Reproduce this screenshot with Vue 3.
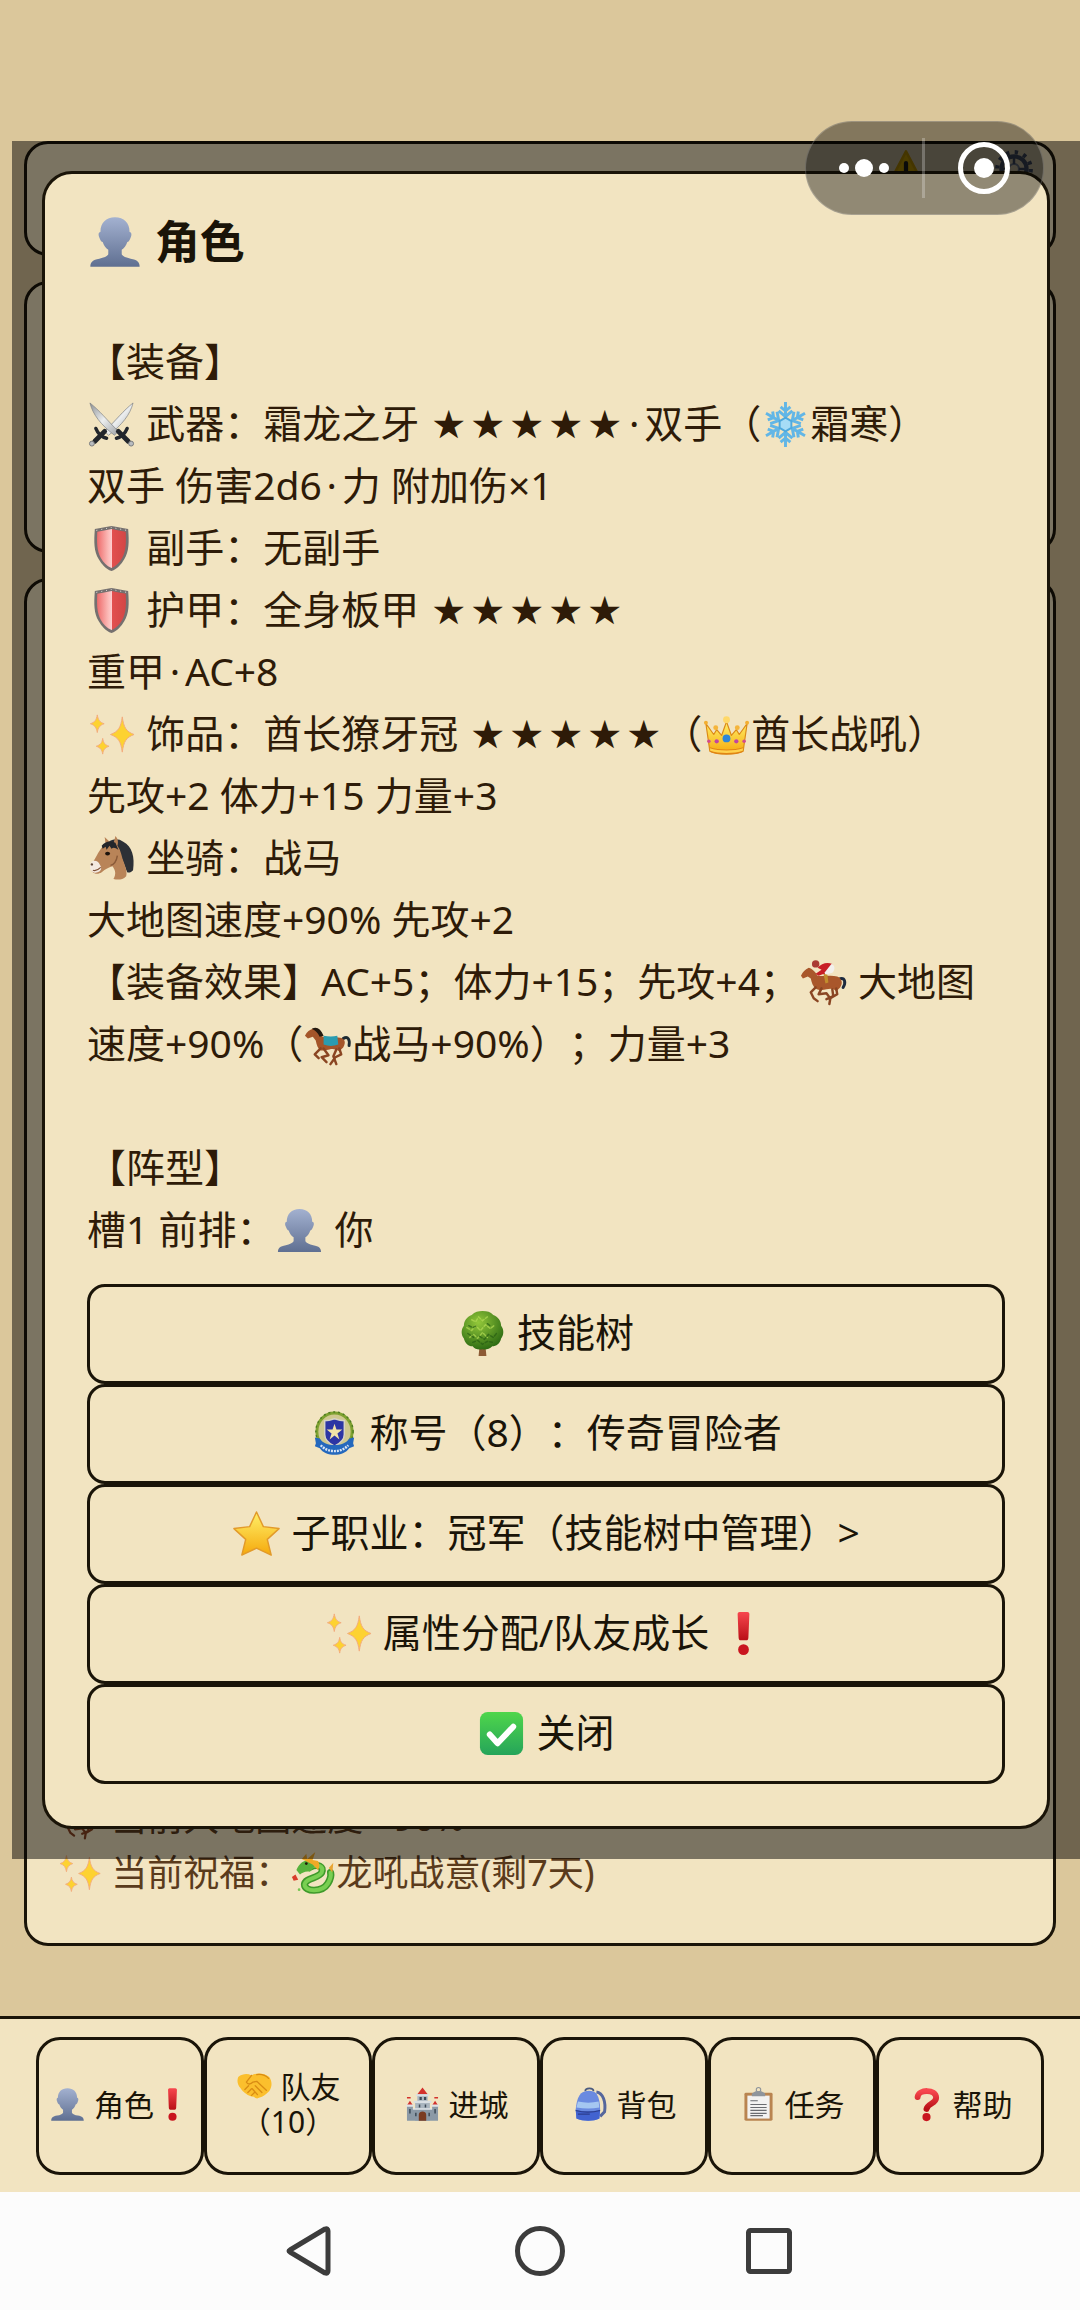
<script setup>
import { h } from 'vue'

const Icon = (props) =>
  h('svg', { class: 'ico', viewBox: '0 0 50 50', 'aria-hidden': 'true' }, [h('use', { href: '#i-' + props.name })])
Icon.props = ['name']

const actions = [
  { icon: 'tree', text: '技能树' },
  { icon: 'badge', text: '称号（8）：传奇冒险者' },
  { icon: 'star', text: '子职业：冠军（技能树中管理）>' },
  { icon: 'sparkles', text: '属性分配/队友成长 ', mark: true },
  { icon: 'check', text: '关闭' },
]

const tabs = [
  { icon: 'user', text: '角色', mark: true },
  { icon: 'handshake', text: '队友（10）' },
  { icon: 'castle', text: '进城' },
  { icon: 'backpack', text: '背包' },
  { icon: 'clipboard', text: '任务' },
  { icon: 'question', text: '帮助' },
]
</script>

<template>
  <svg class="sprite" aria-hidden="true">
    <defs>
      <linearGradient id="g-user" x1="0" y1="0" x2="0" y2="1"><stop offset="0" stop-color="#a3b1d0" /><stop offset="1" stop-color="#5f6f91" /></linearGradient>
      <linearGradient id="g-gold" x1="0" y1="0" x2="0" y2="1"><stop offset="0" stop-color="#fff06a" /><stop offset="1" stop-color="#f5a90c" /></linearGradient>
      <linearGradient id="g-green" x1="0" y1="0" x2="0" y2="1"><stop offset="0" stop-color="#4fd64b" /><stop offset="1" stop-color="#25a45a" /></linearGradient>
      <linearGradient id="g-red" x1="0" y1="0" x2="0" y2="1"><stop offset="0" stop-color="#f7474e" /><stop offset="1" stop-color="#b90f16" /></linearGradient>
      <linearGradient id="g-shield" x1="0" y1="0" x2="1" y2="0"><stop offset="0" stop-color="#ee6a6a" /><stop offset=".38" stop-color="#fbb9b6" /><stop offset=".5" stop-color="#fcc" /><stop offset=".52" stop-color="#e2504f" /><stop offset="1" stop-color="#d24645" /></linearGradient>
      <linearGradient id="g-blade" x1="0" y1="0" x2="1" y2="1"><stop offset="0" stop-color="#8c9094" /><stop offset=".5" stop-color="#eceeef" /><stop offset="1" stop-color="#9da1a5" /></linearGradient>
      <radialGradient id="g-tree" cx=".4" cy=".3" r=".7"><stop offset="0" stop-color="#93c83a" /><stop offset="1" stop-color="#2f6d14" /></radialGradient>
    </defs>

    <symbol id="i-user" viewBox="0 0 50 50">
      <path fill="url(#g-user)" d="M25 3c8 0 13 5 13 13 2 0 2 3 1 5-1 3-2 4-3 4-1 3-3 6-5 7v4c1 2 4 3 8 4 6 1 8 3 8 7H3c0-4 2-6 8-7 4-1 7-2 8-4v-4c-2-1-4-4-5-7-1 0-2-1-3-4-1-2-1-5 1-5 0-8 5-13 13-13z" />
    </symbol>

    <symbol id="i-swords" viewBox="0 0 50 50">
      <path fill="url(#g-blade)" stroke="#7c7f82" stroke-width=".7" d="M47 3c-3 12-11 22-25 33l-4-4C30 20 37 11 47 3z" />
      <path fill="url(#g-blade)" stroke="#7c7f82" stroke-width=".7" d="M3 3c3 12 11 22 25 33l4-4C20 20 13 11 3 3z" />
      <g stroke="#22262c" fill="none" stroke-linecap="round">
        <path stroke-width="3.500" d="M9 29c2 5 6 9 11 10M41 29c-2 5-6 9-11 10" />
        <path stroke-width="5" d="M18 32L8 42M32 32l10 10" />
      </g>
      <circle cx="5" cy="44.500" r="2.500" fill="#b9bcc0" stroke="#77797c" /><circle cx="45" cy="44.500" r="2.500" fill="#b9bcc0" stroke="#77797c" />
    </symbol>

    <symbol id="i-shield" viewBox="0 0 50 50">
      <path fill="#75706f" d="M8 5c6-1 11-2 17-3 6 1 11 2 17 3 1 13 1 23-4 31-3 5-7 10-13 12-6-2-10-7-13-12C7 28 7 18 8 5z" />
      <path fill="url(#g-shield)" d="M10.500 8C15 7 20 6 25 5c5 1 10 2 14.500 3 .5 11 .5 19-3.500 26.500-2.500 4.500-6 8.500-11 10.500-5-2-8.500-6-11-10.500C10 27 10 19 10.500 8z" />
      <path fill="none" stroke="#e4e0de" stroke-width="1" stroke-dasharray="1 4" d="M9.500 6.500C15 5.500 20 4.500 25 3.500 30 4.500 35 5.500 40.500 6.500" />
    </symbol>

    <symbol id="i-sparkles" viewBox="0 0 50 50">
      <g fill="#fdd231" stroke="#f3ab7e" stroke-width="1" stroke-linejoin="round">
        <path d="M36 7c1.500 11 4 15 12 18-8 3-10.500 7-12 18-1.500-11-4-15-12-18 8-3 10.500-7 12-18z" />
        <path d="M10.500 5c.8 5 2.500 7.500 7 9-4.500 1.500-6.200 4-7 9-.8-5-2.500-7.500-7-9 4.500-1.500 6.200-4 7-9z" />
        <path d="M16 29c.7 4.500 2.200 6.500 6.500 8-4.300 1.500-5.800 3.500-6.500 8-.7-4.500-2.200-6.500-6.500-8 4.300-1.500 5.800-3.500 6.500-8z" />
      </g>
    </symbol>

    <symbol id="i-snow" viewBox="0 0 50 50">
      <path v-for="a in 6" :key="a" :transform="'rotate(' + a * 60 + ' 25 25)'" fill="none" stroke="#62b6e6" stroke-width="3" d="M25 23V2M25 17l-7-6M25 17l7-6M25 11l-5-4M25 11l5-4" />
      <path fill="#a7dcf6" stroke="#4fa9dd" stroke-width="2" d="M25 18l6 3.500v7L25 32l-6-3.500v-7z" />
    </symbol>

    <symbol id="i-crown" viewBox="0 0 50 50">
      <path fill="url(#g-gold)" stroke="#dc8a17" stroke-width="1.200" stroke-linejoin="round" d="M4 14l8 11 3-5 5 6 5-14 5 14 5-6 3 5 8-11-4 28c-8 4-26 4-34 0z" />
      <path fill="#e08514" d="M8 38c9 3 25 3 34 0l-1 5c-8 3-24 3-32 0z" /><path fill="#ffd24d" d="M8 39c9 3 25 3 34 0l-.5 2.500c-8 3-25 3-33 0z" />
      <circle cx="25" cy="10" r="3.500" fill="#ffd868" /><circle cx="4" cy="13" r="2" fill="#f3ae30" /><circle cx="46" cy="13" r="2" fill="#f3ae30" /><circle cx="14" cy="18" r="2.500" fill="#f5b53b" /><circle cx="36" cy="18" r="2.500" fill="#f5b53b" />
      <circle cx="25" cy="29" r="4" fill="#2f86d8" /><circle cx="15" cy="32" r="2.200" fill="#c144a4" /><circle cx="35" cy="32" r="2.200" fill="#c144a4" /><circle cx="7" cy="32" r="1.800" fill="#d24c8e" /><circle cx="43" cy="32" r="1.800" fill="#d24c8e" />
    </symbol>

    <symbol id="i-horsehead" viewBox="0 0 50 50">
      <path fill="#2c3036" d="M22 8c4-3 10-4 15 0 9 5 12 15 10 29-2 2-4 3-6 2l-5-13-12-10z" />
      <path fill="#b98458" d="M19 10l-1-7 4 4c1 1 3 2 5 3l2-8c3 3 3 7 2 10 4 5 4 11 7 18 2 5 3 10 2 13-4 4-8 4-13 3 3-5 2-9-1-13-4 1-7 3-11 6-3 2-7 2-9 0-3-3-2-7 0-10 4-6 6-13 13-19z" />
      <path fill="#f3e8e0" d="M5 28c3-2 7 0 8 3 2 3 2 5 0 7-3 2-6 2-8 0-3-3-2-7 0-10z" />
      <path fill="#23262b" d="M15 12c3-4 8-6 14-3l3 7c-3-2-5-3-7-1l-2-3-3 4-1-3-3 2z" />
      <ellipse cx="21" cy="20" rx="2.500" ry="2" fill="#1d130d" /><path stroke="#7b4c31" stroke-width="1.200" fill="none" d="M6 37c3 1 6-1 8-3" /><circle cx="5" cy="31" r="1.200" fill="#5e4334" />
      <path stroke="#8a5a38" stroke-width="1.500" fill="none" d="M31 22c-1 6-3 9-7 10" />
    </symbol>

    <symbol id="i-horse" viewBox="0 0 50 50">
      <path fill="none" stroke="#1c2a33" stroke-width="3" stroke-linecap="round" d="M41 19c5-3 7 1 6 7" />
      <path fill="#a4552a" d="M2 16c2-4 5-6 8-7 5 1 7 4 10 8 7 1 12 0 18 1 5 1 6 5 3 10l-4 4c-3-2-6-3-10-2-4 1-6 1-9 1-3-2-4-5-5-10l-3-4-5 2z" />
      <path fill="none" stroke="#8a4522" stroke-width="2.500" stroke-linecap="round" stroke-linejoin="round" d="M18 29l-6 6 4 4M21 29l5 7-7 2 5 5M37 29l2 6-6 3-5 7M34 30l-3 7 3 8" />
      <path fill="#2a9cb0" d="M21 16c5 1 10 1 14 0l1 9c-5 2-10 2-15 0z" />
      <path fill="#24190f" d="M9 9c5-3 9 0 12 7l-4 1c-2-4-4-6-8-8z" />
    </symbol>

    <symbol id="i-jockey" viewBox="0 0 50 50">
      <path fill="none" stroke="#1c2a3f" stroke-width="3" stroke-linecap="round" d="M42 21c5-1 6 4 3 9" />
      <path fill="#a9572b" d="M2 18c2-4 4-6 8-8 4 1 7 5 9 8 8 1 14-1 20 1 5 2 6 7 3 11l-4 4c-3-3-6-3-10-2-4 1-8 1-11-1-3-2-4-6-5-10l-3-2-5 2z" />
      <path fill="none" stroke="#8a4522" stroke-width="2.500" stroke-linecap="round" stroke-linejoin="round" d="M17 30l-5 5 3 6 4 3M23 31l-3 6 8-1 3 4M38 31l1 6-7 4-1 6M34 32l1 7-7 3" />
      <circle cx="17" cy="6" r="3.800" fill="#a93a33" /><path fill="#c81e25" d="M19 10c4-5 10-6 15-4l-5 10c-4 0-6 1-9 2l-3-2 6-4z" />
      <path fill="#f3f0ec" d="M33 6c4 1 4 6 1 9l-7 2-1-2z" /><path fill="#c28d2d" d="M25 16l4 1 1 8-3 1z" />
    </symbol>

    <symbol id="i-tree" viewBox="0 0 50 50">
      <path fill="#8d5a35" d="M22 38h6l1 10h-8z" />
      <path fill="url(#g-tree)" d="M25 2c5 0 8 1 11 4 5 2 8 6 8 11 3 4 3 9 0 13-1 5-5 8-9 8-3 3-7 4-10 3-4 1-8 0-10-3-5 0-8-4-9-8-3-4-3-9 0-13 0-5 3-9 8-11 3-3 7-4 11-4z" />
      <path fill="none" stroke="#b4dc55" stroke-width="1.500" stroke-linecap="round" stroke-dasharray="3 2" d="M14 11l4 2 3-5 4 4 5-4M9 19l5 3 4-5 5 5 5-6 5 4 5-4M12 29l4-3 4 4 5-6 5 5" opacity=".7" />
      <path fill="none" stroke="#275c12" stroke-width="1.500" stroke-linecap="round" stroke-dasharray="3 2" d="M11 17l4 2 4-2M22 28l5 3 4-5 5 3 4-5M15 34l5-2 5 4 5-3 5 1M30 15l4 3M10 25l6 4" opacity=".7" />
    </symbol>

    <symbol id="i-badge" viewBox="0 0 50 50">
      <ellipse cx="25" cy="23" rx="18" ry="19" fill="#cfc88f" stroke="#7fa231" stroke-width="3" />
      <ellipse cx="25" cy="23" rx="19" ry="20" fill="none" stroke="#4f7c22" stroke-width="1.500" stroke-dasharray="2 3" />
      <path fill="#2c35a4" stroke="#d5d3c6" stroke-width="1.500" d="M15 12c4 0 7-1 10-2 3 1 6 2 10 2v14c0 5-4 9-10 12-6-3-10-7-10-12z" />
      <path fill="#f2e3a7" d="M25 15l2 6h6l-5 4 2 6-5-4-5 4 2-6-5-4h6z" />
      <path fill="#2468bd" d="M5 29l5 1c5 9 25 9 30 0l5-1-1 6 1 3-5 2c-6 9-24 9-30 0l-5-2 1-3z" />
      <path fill="none" stroke="#d8e4f5" stroke-width="2.500" stroke-dasharray="2 1" d="M11 37c7 8 21 8 28 0" />
    </symbol>

    <symbol id="i-star" viewBox="0 0 50 50">
      <path fill="url(#g-gold)" stroke="#e29a2a" stroke-width="1.500" stroke-linejoin="round" d="M25 3l7 15 16 2-12 11 4 16-15-7-15 7 4-16L2 20l16-2z" />
    </symbol>

    <symbol id="i-check" viewBox="0 0 50 50">
      <rect x="3" y="3" width="44" height="44" rx="8" fill="url(#g-green)" />
      <path fill="none" stroke="#fff" stroke-width="6" stroke-linecap="round" stroke-linejoin="round" d="M13 26l8 9 16-17" />
    </symbol>

    <symbol id="i-exclaim" viewBox="0 0 50 50">
      <path fill="url(#g-red)" d="M19 5c0-1 1-2 2-2h8c1 0 2 1 2 2l-1 24c0 2-1 3-2 3h-6c-1 0-2-1-2-3z" /><circle cx="25" cy="41.500" r="5.500" fill="#c9151f" />
    </symbol>

    <symbol id="i-question" viewBox="0 0 50 50">
      <path fill="none" stroke="url(#g-red)" stroke-width="8" stroke-linecap="round" stroke-linejoin="round" d="M13 15c1-11 25-11 25 1 0 8-11 7-13 15" /><circle cx="25" cy="42" r="5.500" fill="#c9151f" />
    </symbol>

    <symbol id="i-handshake" viewBox="0 0 50 50">
      <path fill="#fbbf2d" d="M3 12c6-4 12-5 18-2 7-4 17-3 24 2 4 6 4 13 0 19-4 4-9 8-13 9-3 2-6 1-8-1-8-1-14-6-18-12-4-4-5-10-3-15z" />
      <path fill="none" stroke="#d98c14" stroke-width="1.800" stroke-linecap="round" stroke-linejoin="round" d="M21 10l-7 9c2 4 6 3 9 0l5-1 13 12M26 24l9 9M22 28l7 8M12 29l5-5M16 33l5-5M21 37l4-4M28 9c6-1 12 1 16 5" />
    </symbol>

    <symbol id="i-castle" viewBox="0 0 50 50">
      <path fill="#d3322d" d="M25 2l7 9H18zM8 20l4 6H4zM42 20l4 6h-8z" /><path fill="none" stroke="#d3322d" stroke-width="2" d="M9 16H4M46 16h-5" />
      <path fill="#a9b5bf" d="M18 11h14v10h3v26H15V21h3z" /><path fill="#d9dfe3" d="M16 11h18v3H16zM13 20h24v3H13z" />
      <path fill="#8b99a6" d="M4 26h8v21H4zM38 26h8v21h-8zM12 31h26v16H12z" /><path fill="#dfe4e7" d="M3 25h10v3H3zM37 25h10v3H37zM12 30h26v2H12z" />
      <path fill="#7a3c22" d="M20 47V39c0-6 10-6 10 0v8z" /><path fill="#3b4955" d="M21 15h3v4h-3zM27 15h3v4h-3zM20 25h2v4h-2zM28 25h2v4h-2zM7 31h2v6H7zM41 31h2v6h-2zM15 36h2v5h-2zM33 36h2v5h-2z" />
    </symbol>

    <symbol id="i-backpack" viewBox="0 0 50 50">
      <path fill="none" stroke="#56679c" stroke-width="4" d="M33 8c9 1 13 14 11 27l-6 6" />
      <path fill="none" stroke="#4a5a80" stroke-width="2.500" d="M18 7c0-5 11-5 11 0" />
      <path fill="#6a8ae0" d="M12 10c6-5 16-5 21 0 4 6 5 14 5 22l-1 12c-8 4-22 4-31 0L5 32c1-9 2-16 7-22z" />
      <path fill="#a5c7f1" d="M8 21c9 2 19 2 28 0l1 8c-10 2-20 2-31 0z" />
      <path fill="#4263d0" d="M5 32c11 3 22 3 33 0l-1 12c-8 4-22 4-31 0z" /><path fill="none" stroke="#2c3e8c" stroke-width="1.500" d="M5 33c11 3 22 3 33 0M8 38h16" />
    </symbol>

    <symbol id="i-clipboard" viewBox="0 0 50 50">
      <rect x="6" y="9" width="38" height="38" rx="2" fill="#b98450" /><rect x="10" y="13" width="30" height="31" fill="#f3f2f1" />
      <path stroke="#6a6c70" stroke-width="1.500" d="M14 20h10M14 25h22M14 29h22M14 33h22M14 37h22M14 40h17" />
      <path fill="#8f959c" d="M16 10l5-3h8l5 3v4H16z" /><circle cx="25" cy="5" r="3" fill="none" stroke="#8f959c" stroke-width="1.500" />
    </symbol>

    <symbol id="i-dragon" viewBox="0 0 50 50">
      <path fill="none" stroke="#3f9a2b" stroke-width="8" stroke-linecap="round" stroke-linejoin="round" d="M21 18c9-4 16-1 13 6-3 6-18 6-19 13 0 9 20 9 26-1 3-5 4-8 3-12" />
      <path fill="none" stroke="#79cf52" stroke-width="4.500" stroke-linecap="round" stroke-linejoin="round" d="M21 18c9-4 16-1 13 6-3 6-18 6-19 13 0 9 20 9 26-1 3-5 4-8 3-12" />
      <path fill="#57b23c" d="M6 21c3-7 8-11 15-11l6 6-6 7c-5-1-8 1-11 3z" /><path fill="#f0a927" d="M12 9l5-6 1 6 9-8-3 9 6 1c2 3 2 7 0 10l-6-6z" />
      <path fill="#e9a431" d="M42 19l5-6-1 11z" /><circle cx="17" cy="14" r="1.500" fill="#231a09" /><path fill="#d93c2b" d="M1 29l4-3 3 6-5 1z" /><circle cx="9" cy="43" r="1.500" fill="#76c653" />
    </symbol>

    <symbol id="i-warning" viewBox="0 0 50 50">
      <path fill="#f5c400" stroke="#e0ae00" stroke-width="3" stroke-linejoin="round" d="M25 4l21 40H4z" /><path stroke="#242424" stroke-width="5" stroke-linecap="round" d="M25 18v14M25 39v.1" />
    </symbol>

    <symbol id="i-gear" viewBox="0 0 50 50">
      <circle cx="25" cy="25" r="20" fill="none" stroke="#4c5670" stroke-width="5" stroke-dasharray="4 6.500" />
      <circle cx="25" cy="25" r="15" fill="none" stroke="#4c5670" stroke-width="5" /><circle cx="25" cy="25" r="6" fill="none" stroke="#7d879c" stroke-width="2.500" />
      <path stroke="#4c5670" stroke-width="3" d="M25 31v10M31 25h8M11 25h8M25 11v8" />
    </symbol>
  </svg>

  <div class="screen">
    <main class="world">
      <header class="card topbar">
        <Icon name="warning" />
        <Icon name="gear" />
      </header>
      <section class="card scene"></section>
      <section class="card log">
        <p><Icon name="jockey" /> 当前大地图速度 +90%</p>
        <p><Icon name="sparkles" /> 当前祝福：<Icon name="dragon" />龙吼战意(剩7天)</p>
      </section>

      <div class="overlay">
        <section class="dialog" role="dialog" aria-labelledby="dialog-title">
          <h1 id="dialog-title"><Icon name="user" /> 角色</h1>
          <div class="details">
            <p class="section">【装备】</p>
            <p><Icon name="swords" /> 武器：霜龙之牙 <span v-for="n in 5" :key="n" class="rank">★</span><span class="dot">·</span>双手（<Icon name="snow" />霜寒）</p>
            <p>双手 伤害2d6<span class="dot">·</span>力 附加伤×1</p>
            <p><Icon name="shield" /> 副手：无副手</p>
            <p><Icon name="shield" /> 护甲：全身板甲 <span v-for="n in 5" :key="n" class="rank">★</span></p>
            <p>重甲<span class="dot">·</span>AC+8</p>
            <p><Icon name="sparkles" /> 饰品：酋长獠牙冠 <span v-for="n in 5" :key="n" class="rank">★</span>（<Icon name="crown" />酋长战吼）</p>
            <p>先攻+2 体力+15 力量+3</p>
            <p><Icon name="horsehead" /> 坐骑：战马</p>
            <p>大地图速度+90% 先攻+2</p>
            <p>【装备效果】AC+5；体力+15；先攻+4；<Icon name="jockey" /> 大地图<br />速度+90%（<Icon name="horse" />战马+90%）；力量+3</p>
            <p class="section">【阵型】</p>
            <p>槽1 前排：<Icon name="user" /> 你</p>
          </div>
          <div class="actions">
            <button v-for="a in actions" :key="a.text" type="button">
              <span><Icon :name="a.icon" /> {{ a.text }}<Icon v-if="a.mark" name="exclaim" /></span>
            </button>
          </div>
        </section>
      </div>

      <div class="capsule">
        <button type="button" aria-label="更多">
          <svg width="50" height="20" viewBox="0 0 50 20"><g fill="#fff"><circle cx="5" cy="10" r="5" /><circle cx="25" cy="10" r="9" /><circle cx="45" cy="10" r="5" /></g></svg>
        </button>
        <i></i>
        <button type="button" aria-label="关闭小程序">
          <svg width="52" height="52" viewBox="0 0 52 52"><circle cx="26" cy="26" r="23.500" fill="none" stroke="#fff" stroke-width="5" /><circle cx="26" cy="26" r="10" fill="#fff" /></svg>
        </button>
      </div>
    </main>

    <nav class="tabs">
      <button v-for="t in tabs" :key="t.text" type="button">
        <span><Icon :name="t.icon" /> {{ t.text }}<Icon v-if="t.mark" name="exclaim" /></span>
      </button>
    </nav>

    <footer class="system">
      <button type="button" aria-label="返回">
        <svg width="54" height="54" viewBox="0 0 54 54"><path d="M6 26L41 5q3-1 3 2v40q0 3-3 2L6 28q-2-1 0-2z" /></svg>
      </button>
      <button type="button" aria-label="主页">
        <svg width="54" height="54" viewBox="0 0 54 54"><circle cx="27" cy="27" r="22.500" /></svg>
      </button>
      <button type="button" aria-label="最近任务">
        <svg width="54" height="54" viewBox="0 0 54 54"><rect x="6.500" y="6.500" width="41" height="41" rx="2" /></svg>
      </button>
    </footer>
  </div>
</template>

<style>
body {
  margin: 0;
  background: #dbc79b;
}
</style>

<style scoped>
.sprite {
  position: absolute;
  width: 0;
  height: 0;
}
.screen {
  display: flex;
  flex-direction: column;
  min-height: 100vh;
  font-family: "Noto Sans", "Noto Sans CJK SC", sans-serif;
  color: #1a1408;
  background: #dbc79b;
  text-spacing-trim: space-all;
}
button {
  margin: 0;
  padding: 0;
  border: 0;
  background: none;
  font: inherit;
  color: inherit;
  text-spacing-trim: inherit;
}
p,
h1 {
  margin: 0;
}
.ico {
  width: var(--ico);
  height: var(--ico);
  margin-block: -10px;
  vertical-align: var(--lift);
}

.world {
  position: relative;
  flex: 1;
  display: flex;
  flex-direction: column;
  gap: 25px;
  padding: 141px 24px 70px;
}
.card {
  box-sizing: border-box;
  border: 3px solid #1a1408;
  border-radius: 24px;
  background: #f2e4c1;
}
.topbar {
  --ico: 42px;
  display: flex;
  justify-content: flex-end;
  gap: 66px;
  min-height: 115px;
  padding: 14px 18px;
}
.scene {
  min-height: 272px;
}
.log {
  --ico: 45px;
  --lift: 0;
  flex: 1;
  display: flex;
  flex-direction: column;
  justify-content: flex-end;
  padding: 43px 30px;
  font-size: 36px;
  line-height: 55px;
  color: #5a3b1c;
}

.overlay {
  position: absolute;
  top: 141px;
  left: 12px;
  right: 0;
  padding: 30px;
  background: rgba(0, 0, 0, 0.49);
}
.dialog {
  --ico: 49px;
  --lift: -1px;
  padding: 42px;
  border: 3px solid #1a1408;
  border-radius: 30px;
  background: #f2e4c1;
  font-size: 39px;
}
.dialog h1 {
  --ico: 56px;
  --lift: -1px;
  font-size: 45px;
  line-height: 52px;
}
.details {
  line-height: 62px;
  color: #2e1b08;
}
.section {
  padding-top: 62px;
}
.rank {
  display: inline-block;
  width: 39px;
  font-family: "Noto Sans CJK SC", sans-serif;
  font-size: 32px;
  line-height: 32px;
  text-align: center;
  vertical-align: 2px;
}
.dot {
  display: inline-block;
  width: 20px;
  text-align: center;
}
.actions {
  display: grid;
  margin-top: 24px;
}
.actions button {
  height: 100px;
  padding-bottom: 4px;
  border: 3px solid #1a1408;
  border-radius: 18px;
  line-height: 62px;
}

.capsule {
  position: absolute;
  top: 121px;
  right: 36px;
  box-sizing: border-box;
  display: grid;
  grid-template-columns: 116px 3px 1fr;
  align-items: center;
  width: 239px;
  height: 94px;
  border: 1px solid rgba(255, 255, 255, 0.2);
  border-radius: 47px;
  background: rgba(0, 0, 0, 0.4);
}
.capsule button {
  display: flex;
  justify-content: center;
}
.capsule i {
  height: 60px;
  background: rgba(255, 255, 255, 0.25);
}

.tabs {
  --ico: 37px;
  --lift: 3px;
  display: grid;
  grid-template-columns: repeat(6, 1fr);
  padding: 18px 36px 17px;
  border-top: 3px solid #1a1408;
  background: #f2e4c1;
  font-size: 30px;
  line-height: 35px;
}
.tabs button {
  height: 138px;
  padding-bottom: 4px;
  border: 3px solid #1a1408;
  border-radius: 24px;
}

.system {
  display: flex;
  justify-content: center;
  gap: 175px;
  height: 118px;
  background: #fcfcfc;
}
.system button {
  display: flex;
  align-items: center;
}
.system svg {
  fill: none;
  stroke: #3c3c3c;
  stroke-width: 5px;
  stroke-linejoin: round;
}
</style>
